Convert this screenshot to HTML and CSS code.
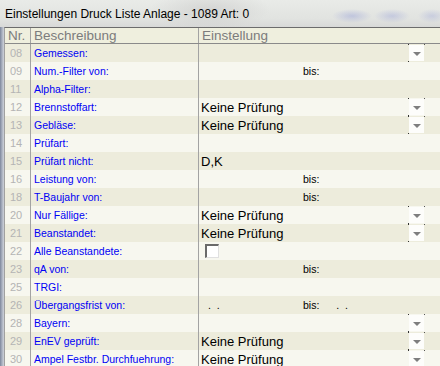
FILE: index.html
```html
<!DOCTYPE html>
<html lang="de">
<head>
  <meta charset="UTF-8">
  <title>Einstellungen Druck Liste Anlage</title>
  <link rel="stylesheet" href="styles.css">
</head>
<body>
  <div class="window">
    <div class="titlebar">
      <span class="title">Einstellungen Druck Liste Anlage - 1089 Art: 0</span>
    </div>

    <div class="grid">
      <div class="row head">
        <div class="nr">Nr.</div>
        <div class="desc">Beschreibung</div>
        <div class="val">Einstellung</div>
      </div>

      <div class="row">
        <div class="nr">08</div><div class="desc">Gemessen:</div>
        <div class="val"><span class="drop"></span></div>
      </div>
      <div class="row">
        <div class="nr">09</div><div class="desc">Num.-Filter von:</div>
        <div class="val"><span class="from"></span><span class="bis">bis:</span></div>
      </div>
      <div class="row">
        <div class="nr">11</div><div class="desc">Alpha-Filter:</div>
        <div class="val"></div>
      </div>
      <div class="row">
        <div class="nr">12</div><div class="desc">Brennstoffart:</div>
        <div class="val"><span class="text">Keine Prüfung</span><span class="drop"></span></div>
      </div>
      <div class="row">
        <div class="nr">13</div><div class="desc">Gebläse:</div>
        <div class="val"><span class="text">Keine Prüfung</span><span class="drop"></span></div>
      </div>
      <div class="row">
        <div class="nr">14</div><div class="desc">Prüfart:</div>
        <div class="val"></div>
      </div>
      <div class="row">
        <div class="nr">15</div><div class="desc">Prüfart nicht:</div>
        <div class="val"><span class="text">D,K</span></div>
      </div>
      <div class="row">
        <div class="nr">16</div><div class="desc">Leistung von:</div>
        <div class="val"><span class="from"></span><span class="bis">bis:</span></div>
      </div>
      <div class="row">
        <div class="nr">18</div><div class="desc">T-Baujahr von:</div>
        <div class="val"><span class="from"></span><span class="bis">bis:</span></div>
      </div>
      <div class="row">
        <div class="nr">20</div><div class="desc">Nur Fällige:</div>
        <div class="val"><span class="text">Keine Prüfung</span><span class="drop"></span></div>
      </div>
      <div class="row">
        <div class="nr">21</div><div class="desc">Beanstandet:</div>
        <div class="val"><span class="text">Keine Prüfung</span><span class="drop"></span></div>
      </div>
      <div class="row">
        <div class="nr">22</div><div class="desc">Alle Beanstandete:</div>
        <div class="val"><span class="check"></span></div>
      </div>
      <div class="row">
        <div class="nr">23</div><div class="desc">qA von:</div>
        <div class="val"><span class="from"></span><span class="bis">bis:</span></div>
      </div>
      <div class="row">
        <div class="nr">25</div><div class="desc">TRGI:</div>
        <div class="val"></div>
      </div>
      <div class="row">
        <div class="nr">26</div><div class="desc">Übergangsfrist von:</div>
        <div class="val"><span class="from date">.&nbsp;&nbsp;.</span><span class="bis">bis:</span><span class="date to">.&nbsp;&nbsp;.</span></div>
      </div>
      <div class="row">
        <div class="nr">28</div><div class="desc">Bayern:</div>
        <div class="val"><span class="drop"></span></div>
      </div>
      <div class="row">
        <div class="nr">29</div><div class="desc">EnEV geprüft:</div>
        <div class="val"><span class="text">Keine Prüfung</span><span class="drop"></span></div>
      </div>
      <div class="row">
        <div class="nr">30</div><div class="desc">Ampel Festbr. Durchfuehrung:</div>
        <div class="val"><span class="text">Keine Prüfung</span><span class="drop"></span></div>
      </div>
    </div>
  </div>
</body>
</html>
```

FILE: styles.css
```css
html, body { margin: 0; padding: 0; }
body {
  width: 440px; height: 366px; overflow: hidden;
  font-family: "Liberation Sans", Arial, sans-serif;
  background: #8d97a8;
}
.window {
  height: 366px;
  background: linear-gradient(to right, #7d879c 0, #a9b0bf 2px, #cfd3da 4px);
}
.titlebar {
  height: 27px;
  display: flex; align-items: center;
  padding-left: 5px;
  background:
    radial-gradient(ellipse 20px 7px at 352px 16px, rgba(140,150,215,0.4), transparent),
    radial-gradient(ellipse 18px 7px at 392px 16px, rgba(140,150,215,0.35), transparent),
    radial-gradient(ellipse 14px 7px at 432px 16px, rgba(140,150,215,0.3), transparent),
    radial-gradient(ellipse 60px 20px at 210px 10px, rgba(200,200,200,0.6), transparent),
    linear-gradient(to bottom, #e9ebe8, #e1e3e0 70%, #d8d9d8);
  box-sizing: border-box;
}
.title { font-size: 12px; color: #000; }

.grid {
  margin-left: 4px;
  border-left: 1px solid #a0a0a0;
  border-top: 1px solid #6c6c6c;
  background: #f7f7ef;
  height: 339px; overflow: hidden;
}
.row {
  display: flex; height: 18px;
  background: #f7f7ef;
}
.row:nth-child(even) { background: #edecdc; }
.row.head {
  height: 15px;
  background: #efefde;
  border-bottom: 1px solid #8a8a8a;
  color: #7c7c7c; font-size: 13.5px;
}
.nr, .desc { border-right: 1px solid #a3a3a3; }
.nr {
  width: 26px; flex: none;
  color: #b4b4b4; font-size: 11px;
  padding-left: 5px; box-sizing: border-box;
  display: flex; align-items: center;
}
.desc {
  width: 168px; flex: none;
  color: #0000f5; font-size: 10.5px;
  padding-left: 3px; box-sizing: border-box;
  display: flex; align-items: center;
}
.val {
  flex: 1; display: flex; align-items: center;
  padding-left: 2px; padding-right: 16px;
  font-size: 13px; color: #000;
}
.head .nr { color: #7c7c7c; font-size: 13.5px; padding-left: 3px; }
.head .desc { color: #7c7c7c; font-size: 13.5px; }
.head .val { color: #7c7c7c; font-size: 13.5px; padding-left: 3px; }

.from { width: 102px; flex: none; }
.bis { font-size: 10.5px; }
.date { font-size: 10.5px; padding-left: 7px; box-sizing: border-box; }
.date.to { padding-left: 17px; }

.drop {
  margin-left: auto; position: relative;
  width: 15px; height: 16px; flex: none;
  background: #fdfdfb;
}
.drop::after {
  content: ""; position: absolute; left: 4px; top: 7px;
  border-left: 4px solid transparent; border-right: 4px solid transparent;
  border-top: 4px solid #7e7e7e;
}
.drop::before {
  content: ""; position: absolute; left: -1px; bottom: -1px;
  width: 1px; height: 1px; background: #333;
  box-shadow: 0 -17px 0 #333, 16px -17px 0 #555;
}
.check {
  width: 11px; height: 11px; margin-left: 4px;
  background: #fff;
  border-top: 2px solid #6a6a6a; border-left: 2px solid #6a6a6a;
  border-right: 1px solid #e0e0e0; border-bottom: 1px solid #e0e0e0;
}
```
